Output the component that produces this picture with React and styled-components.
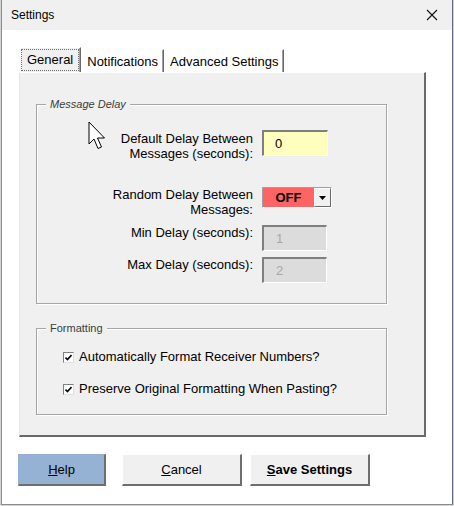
import React from "react";
import styled, { createGlobalStyle } from "styled-components";

const Global = createGlobalStyle`
  html, body { margin: 0; padding: 0; background: #d4d4d4; }
  body { font-family: "Liberation Sans", Arial, sans-serif; font-size: 13px; color: #000; }
  * { box-sizing: border-box; }
`;

const Window = styled.div`
  position: relative;
  margin-left: 1px;
  width: 452px;
  height: 505px;
  background: #fff;
  border-left: 1px solid #8c8c8c;
  border-right: 1px solid #5d6a85;
  border-bottom: 1px solid #8c8c8c;
  display: flex;
  flex-direction: column;
`;

const TitleBar = styled.div`
  height: 30px;
  flex: none;
  background: #f0f0f0;
  display: flex;
  align-items: center;
  justify-content: space-between;
  padding: 0 8px 0 9px;
  font-size: 12px;
`;

const CloseButton = styled.div`
  width: 24px;
  height: 24px;
  display: flex;
  align-items: center;
  justify-content: center;
`;

const Body = styled.div`
  flex: 1;
  padding: 17px 0 0 17px;
  display: flex;
  flex-direction: column;
`;

const TabStrip = styled.div`
  display: flex;
  align-items: flex-end;
  height: 25px;
  padding-left: 1px;
`;

const Tab = styled.div`
  height: ${p => (p.$active ? 25 : 23)}px;
  display: flex;
  align-items: center;
  justify-content: center;
  padding: ${p => (p.$active ? "0 1px 1px 0" : "0 5px 0 5px")};
  background: ${p => (p.$active ? "#f0f0f0" : "#fff")};
  border-left: 1px solid #fff;
  border-top: 1px solid #fff;
  border-right: 1px solid #6a6a6a;
  box-shadow: inset -1px 0 0 #a0a0a0;
  white-space: nowrap;
`;

const Focus = styled.span`
  display: flex;
  align-items: center;
  height: 22px;
  padding: 0 5px 0 5px;
  border: 1px dotted #707070;
`;

const Panel = styled.div`
  width: 407px;
  height: 365px;
  background: #f0f0f0;
  border-top: 1px solid #fff;
  border-left: 1px solid #e4e4e4;
  border-right: 2px solid #696969;
  border-bottom: 2px solid #696969;
  padding: 31px 0 0 16px;
  display: flex;
  flex-direction: column;
`;

const Frame = styled.div`
  position: relative;
  width: 351px;
  margin-top: ${p => p.$top || 0}px;
  border: 1px solid #a6a6a6;
  box-shadow: inset 1px 1px 0 #fff, 1px 1px 0 #fff;
  padding: ${p => p.$pad};
`;

const Legend = styled.span`
  position: absolute;
  top: -8px;
  left: 9px;
  padding: 0 4px;
  background: #f0f0f0;
  font-size: 11px;
  line-height: 15px;
  color: #3c3c3c;
  font-style: ${p => (p.$italic ? "italic" : "normal")};
`;

const Row = styled.div`
  display: flex;
  align-items: flex-start;
  margin-top: ${p => p.$top || 0}px;
`;

const Label = styled.div`
  width: 216px;
  text-align: right;
  line-height: 15px;
  margin-right: 9px;
  padding-top: ${p => p.$shift || 0}px;
`;

const TextBox = styled.div`
  width: ${p => p.$w}px;
  height: 26px;
  display: flex;
  align-items: center;
  padding-left: ${p => p.$pl}px;
  background: ${p => (p.$disabled ? "#dcdcdc" : "#ffffc0")};
  color: ${p => (p.$disabled ? "#a8a8a8" : "#000")};
  border-top: 2px solid #7f7f7f;
  border-left: 2px solid #7f7f7f;
  border-right: 1px solid #fff;
  border-bottom: 1px solid #fff;
`;

const Combo = styled.div`
  width: 70px;
  height: 21px;
  display: flex;
  border-top: 1px solid #a0a0a0;
  border-left: 1px solid #a0a0a0;
  border-right: 1px solid #fff;
  border-bottom: 1px solid #fff;
`;

const ComboValue = styled.div`
  flex: 1;
  background: #ff6464;
  font-weight: bold;
  display: flex;
  align-items: center;
  justify-content: center;
`;

const ComboArrow = styled.div`
  width: 17px;
  background: #f0f0f0;
  border-top: 1px solid #fff;
  border-left: 1px solid #fff;
  border-right: 1px solid #696969;
  border-bottom: 1px solid #696969;
  display: flex;
  align-items: center;
  justify-content: center;
`;

const CheckRow = styled.label`
  display: flex;
  align-items: center;
  line-height: 16px;
  margin-top: ${p => p.$top || 0}px;
`;

const Box = styled.span`
  width: 11px;
  height: 11px;
  margin-right: 5px;
  background: #fff;
  border-top: 1px solid #808080;
  border-left: 1px solid #808080;
  border-right: 1px solid #e0e0e0;
  border-bottom: 1px solid #e0e0e0;
  display: flex;
  align-items: center;
  justify-content: center;
`;

const ButtonRow = styled.div`
  display: flex;
  margin-top: 17px;
  margin-left: -1px;
`;

const Button = styled.div`
  width: ${p => p.$w}px;
  height: 32px;
  margin-left: ${p => p.$ml || 0}px;
  display: flex;
  align-items: center;
  justify-content: center;
  background: ${p => (p.$blue ? "#95b2d4" : "#f0f0f0")};
  font-weight: ${p => (p.$bold ? "bold" : "normal")};
  border-top: 1px solid ${p => (p.$blue ? "#95b2d4" : "#fff")};
  border-left: 1px solid ${p => (p.$blue ? "#95b2d4" : "#fff")};
  border-right: 2px solid #6e6e6e;
  border-bottom: 2px solid #6e6e6e;
`;

const Cursor = styled.svg`
  position: absolute;
  left: 86px;
  top: 121px;
`;

const Check = () => (
  <svg width="7" height="7" viewBox="0 0 7 7">
    <path d="M0.5 3.5 L2.5 5.5 L6.5 1" stroke="#000" strokeWidth="1.6" fill="none" />
  </svg>
);

export default function App() {
  return (
    <>
      <Global />
      <Window>
        <TitleBar>
          <span>Settings</span>
          <CloseButton>
            <svg width="12" height="12" viewBox="0 0 12 12">
              <path d="M1 1 L11 11 M11 1 L1 11" stroke="#111" strokeWidth="1.1" />
            </svg>
          </CloseButton>
        </TitleBar>
        <Body>
          <TabStrip>
            <Tab $active>
              <Focus>General</Focus>
            </Tab>
            <Tab>Notifications</Tab>
            <Tab>Advanced Settings</Tab>
          </TabStrip>
          <Panel>
            <Frame $pad="25px 0 20px 0">
              <Legend $italic>Message Delay</Legend>
              <Row>
                <Label $shift={1}>
                  Default Delay Between
                  <br />
                  Messages (seconds):
                </Label>
                <TextBox $w={66} $pl={11}>0</TextBox>
              </Row>
              <Row $top={26}>
                <Label>
                  Random Delay Between
                  <br />
                  Messages:
                </Label>
                <Combo>
                  <ComboValue>OFF</ComboValue>
                  <ComboArrow>
                    <svg width="7" height="4" viewBox="0 0 7 4">
                      <path d="M0 0 H7 L3.5 4 Z" fill="#000" />
                    </svg>
                  </ComboArrow>
                </Combo>
              </Row>
              <Row $top={8}>
                <Label>Min Delay (seconds):</Label>
                <TextBox $w={65} $pl={12} $disabled>1</TextBox>
              </Row>
              <Row $top={6}>
                <Label>Max Delay (seconds):</Label>
                <TextBox $w={65} $pl={12} $disabled>2</TextBox>
              </Row>
            </Frame>
            <Frame $top={24} $pad="20px 0 17px 26px">
              <Legend>Formatting</Legend>
              <CheckRow>
                <Box>
                  <Check />
                </Box>
                Automatically Format Receiver Numbers?
              </CheckRow>
              <CheckRow $top={16}>
                <Box>
                  <Check />
                </Box>
                Preserve Original Formatting When Pasting?
              </CheckRow>
            </Frame>
          </Panel>
          <ButtonRow>
            <Button $w={88} $blue>
              <span><u>H</u>elp</span>
            </Button>
            <Button $w={120} $ml={16}>
              <span><u>C</u>ancel</span>
            </Button>
            <Button $w={120} $ml={8} $bold>
              <span><u>S</u>ave Settings</span>
            </Button>
          </ButtonRow>
        </Body>
        <Cursor width="20" height="29" viewBox="0 0 20 29">
          <path
            d="M1 1 L1 23 L6 18 L10 27.5 L13.5 26 L9.5 17 L16.5 17 Z"
            fill="#fff"
            stroke="#000"
            strokeWidth="1"
            strokeLinejoin="miter"
          />
        </Cursor>
      </Window>
    </>
  );
}
